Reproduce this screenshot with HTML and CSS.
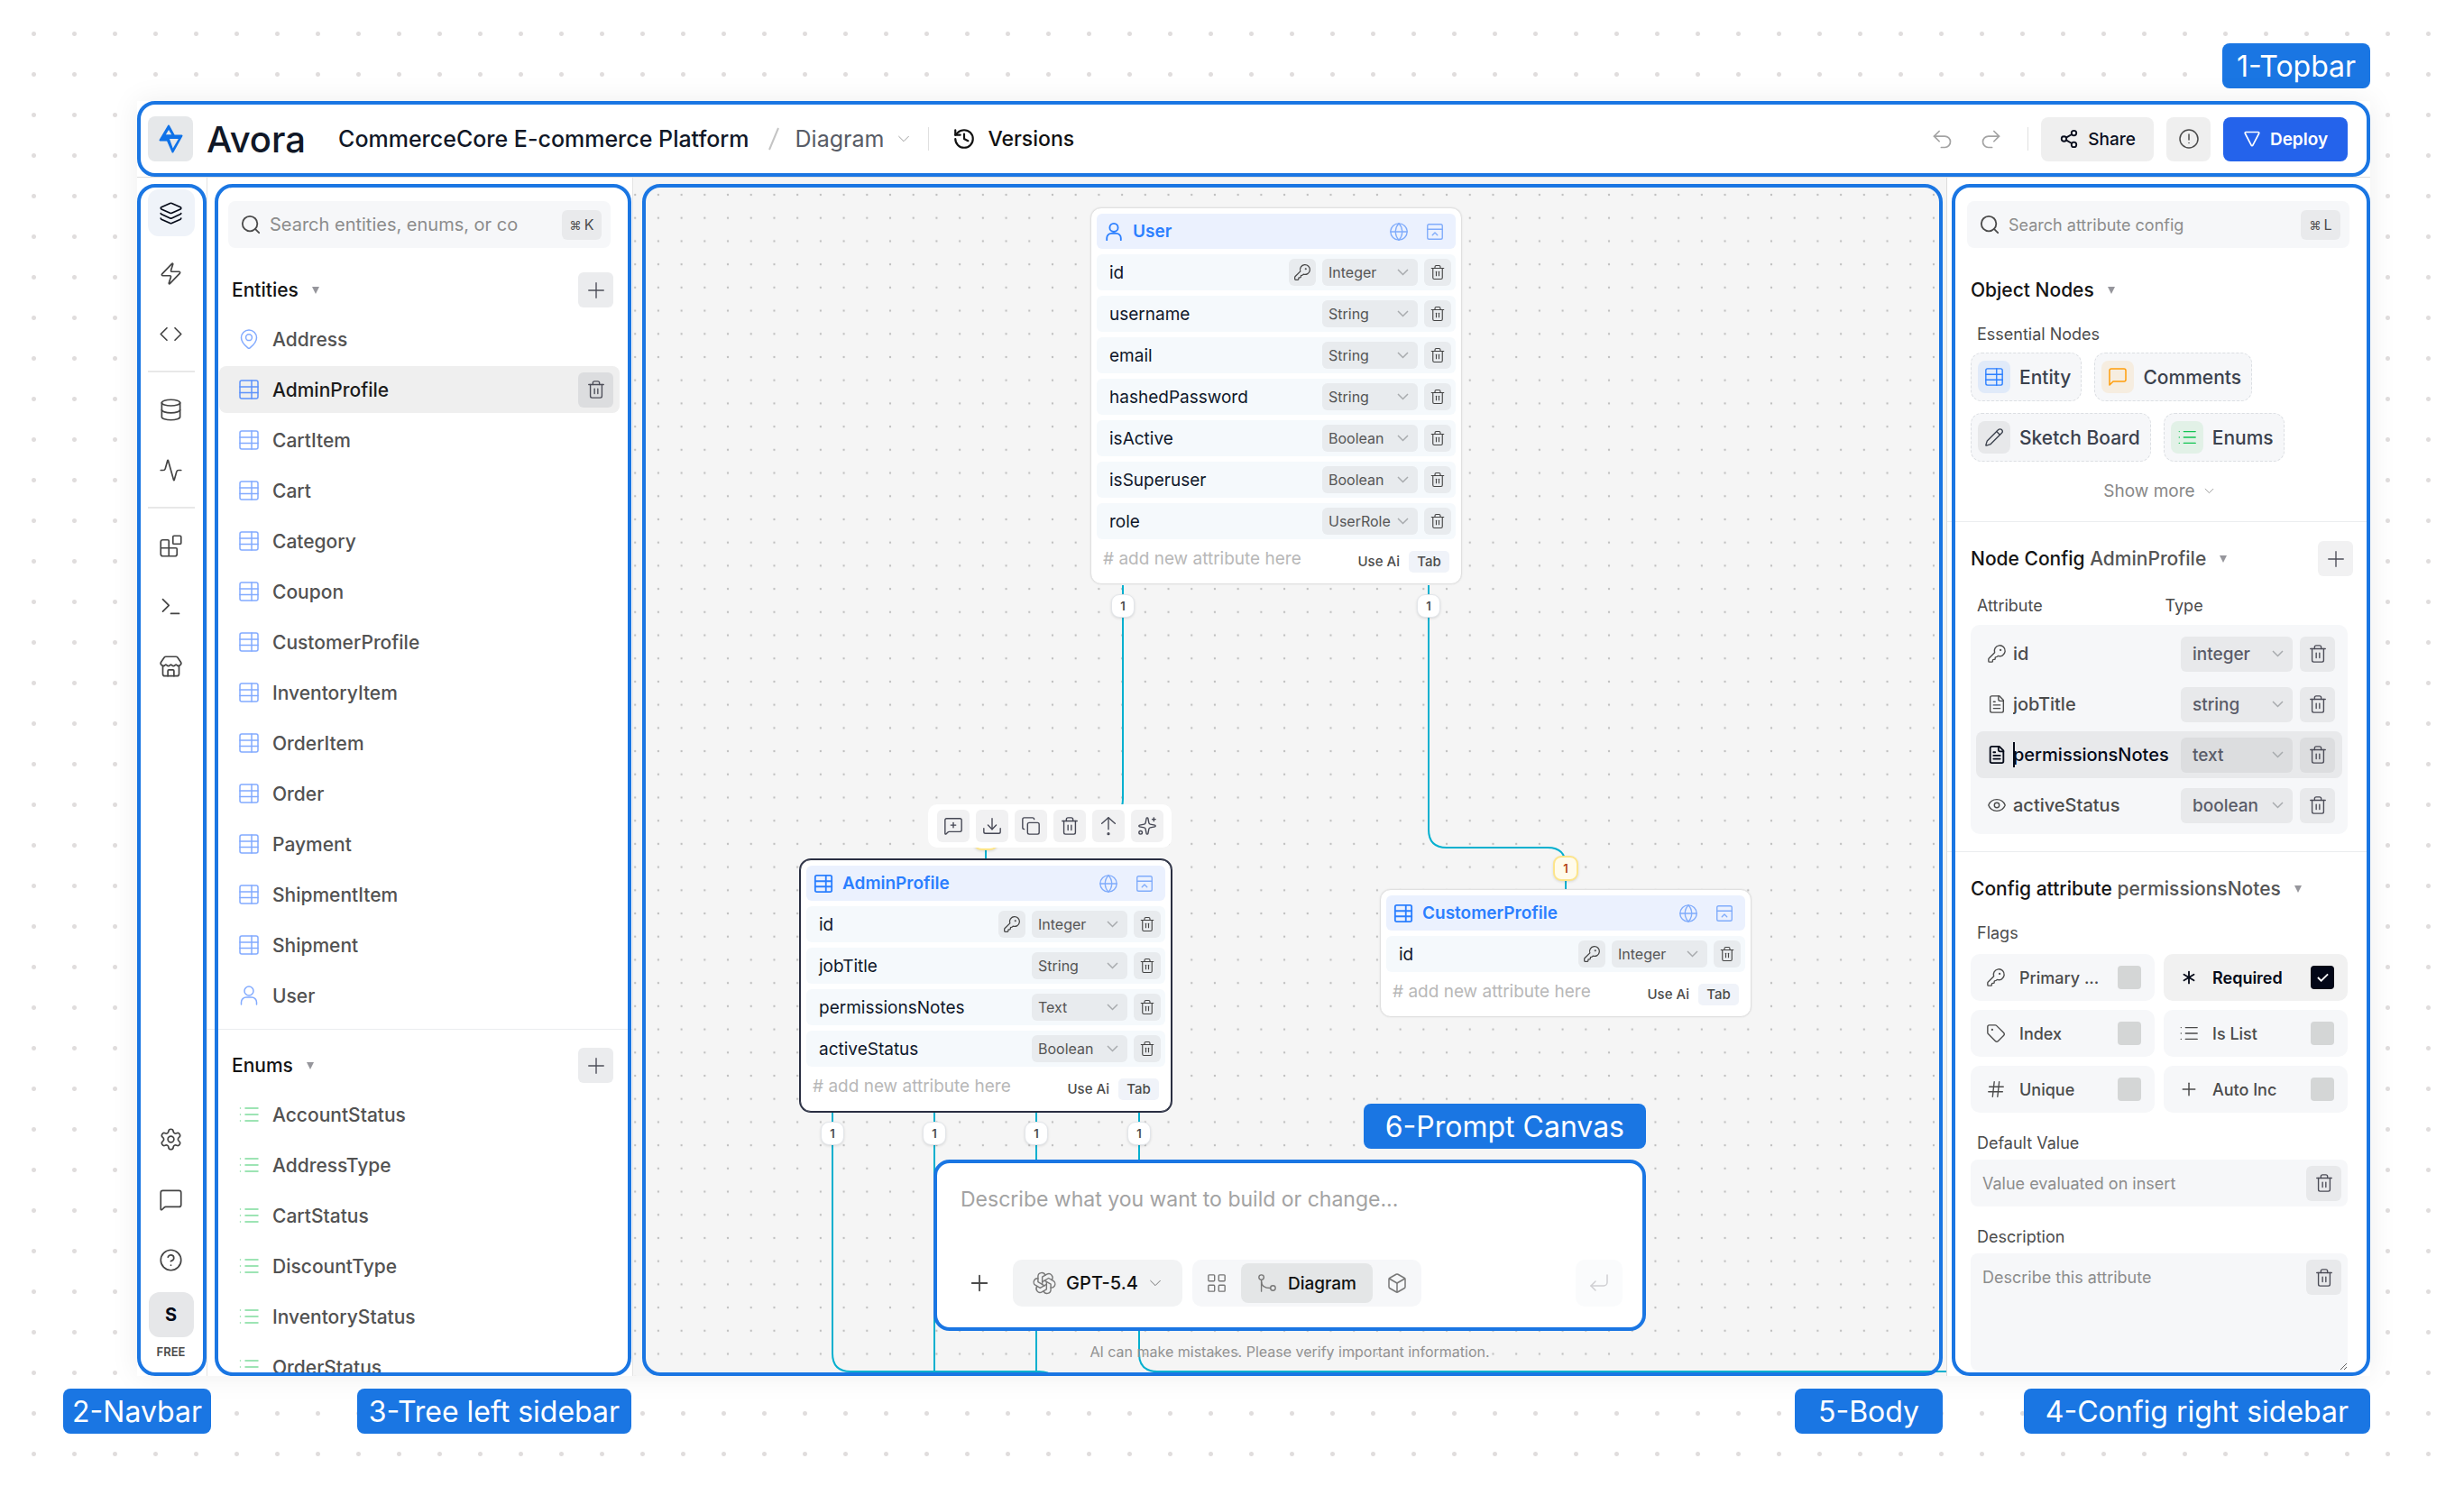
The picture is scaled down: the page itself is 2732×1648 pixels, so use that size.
FILE: index.html
```html
<!DOCTYPE html>
<html lang="en">
<head>
  <meta charset="UTF-8" />
  <meta name="viewport" content="width=device-width, initial-scale=1.0"/>
  <title>Avora - CommerceCore E-commerce Platform</title>
  <link rel="stylesheet" href="styles.css">
</head>
<body>

<!-- icon set -->
<svg class="sprite" aria-hidden="true">
  <symbol id="layers" viewBox="0 0 24 24"><path d="M12.83 2.18a2 2 0 0 0-1.66 0L2.6 6.08a1 1 0 0 0 0 1.83l8.58 3.91a2 2 0 0 0 1.66 0l8.58-3.9a1 1 0 0 0 0-1.83z"/><path d="M2 12a1 1 0 0 0 .58.91l8.6 3.91a2 2 0 0 0 1.65 0l8.58-3.9A1 1 0 0 0 22 12"/><path d="M2 17a1 1 0 0 0 .58.91l8.6 3.91a2 2 0 0 0 1.65 0l8.58-3.9A1 1 0 0 0 22 17"/></symbol>
  <symbol id="zap" viewBox="0 0 24 24"><path d="M4 14a1 1 0 0 1-.78-1.63l9.9-10.2a.5.5 0 0 1 .86.46l-1.92 6.02A1 1 0 0 0 13 10h7a1 1 0 0 1 .78 1.63l-9.9 10.2a.5.5 0 0 1-.86-.46l1.92-6.02A1 1 0 0 0 11 14z"/></symbol>
  <symbol id="code" viewBox="0 0 24 24"><path d="m16 18 6-6-6-6"/><path d="m8 6-6 6 6 6"/></symbol>
  <symbol id="database" viewBox="0 0 24 24"><ellipse cx="12" cy="5" rx="9" ry="3"/><path d="M3 5v14a9 3 0 0 0 18 0V5"/><path d="M3 12a9 3 0 0 0 18 0"/></symbol>
  <symbol id="activity" viewBox="0 0 24 24"><path d="M22 12h-2.48a2 2 0 0 0-1.93 1.46l-2.35 8.36a.25.25 0 0 1-.48 0L9.24 2.18a.25.25 0 0 0-.48 0l-2.35 8.36A2 2 0 0 1 4.49 12H2"/></symbol>
  <symbol id="blocks" viewBox="0 0 24 24"><path d="M10 22V7a1 1 0 0 0-1-1H4a2 2 0 0 0-2 2v12a2 2 0 0 0 2 2h12a2 2 0 0 0 2-2v-5a1 1 0 0 0-1-1H2"/><rect x="14" y="2" width="8" height="8" rx="1"/></symbol>
  <symbol id="terminal" viewBox="0 0 24 24"><path d="M12 19h8"/><path d="m4 17 6-6-6-6"/></symbol>
  <symbol id="store" viewBox="0 0 24 24"><path d="M15 21v-5a1 1 0 0 0-1-1h-4a1 1 0 0 0-1 1v5"/><path d="M17.774 10.31a1.12 1.12 0 0 0-1.549 0 2.5 2.5 0 0 1-3.451 0 1.12 1.12 0 0 0-1.548 0 2.5 2.5 0 0 1-3.452 0 1.12 1.12 0 0 0-1.549 0 2.5 2.5 0 0 1-3.77-3.248l2.889-4.184A2 2 0 0 1 7 2h10a2 2 0 0 1 1.653.873l2.895 4.192a2.5 2.5 0 0 1-3.774 3.244"/><path d="M4 10.95V19a2 2 0 0 0 2 2h12a2 2 0 0 0 2-2v-8.05"/></symbol>
  <symbol id="settings" viewBox="0 0 24 24"><path d="M9.671 4.136a2.34 2.34 0 0 1 4.659 0 2.34 2.34 0 0 0 3.319 1.915 2.34 2.34 0 0 1 2.33 4.033 2.34 2.34 0 0 0 0 3.831 2.34 2.34 0 0 1-2.33 4.033 2.34 2.34 0 0 0-3.319 1.915 2.34 2.34 0 0 1-4.659 0 2.34 2.34 0 0 0-3.32-1.915 2.34 2.34 0 0 1-2.33-4.033 2.34 2.34 0 0 0 0-3.831A2.34 2.34 0 0 1 6.35 6.051a2.34 2.34 0 0 0 3.319-1.915"/><circle cx="12" cy="12" r="3"/></symbol>
  <symbol id="message" viewBox="0 0 24 24"><path d="M22 17a2 2 0 0 1-2 2H6.828a2 2 0 0 0-1.414.586l-2.202 2.202A.71.71 0 0 1 2 21.286V5a2 2 0 0 1 2-2h16a2 2 0 0 1 2 2z"/></symbol>
  <symbol id="comment" viewBox="0 0 24 24"><path d="M21 15a2 2 0 0 1-2 2H7l-4 4V5a2 2 0 0 1 2-2h14a2 2 0 0 1 2 2z"/></symbol>
  <symbol id="comment-plus" viewBox="0 0 24 24"><path d="M22 17a2 2 0 0 1-2 2H6.828a2 2 0 0 0-1.414.586l-2.202 2.202A.71.71 0 0 1 2 21.286V5a2 2 0 0 1 2-2h16a2 2 0 0 1 2 2z"/><path d="M12 8v6"/><path d="M9 11h6"/></symbol>
  <symbol id="help" viewBox="0 0 24 24"><circle cx="12" cy="12" r="10"/><path d="M9.09 9a3 3 0 0 1 5.83 1c0 2-3 3-3 3"/><path d="M12 17h.01"/></symbol>
  <symbol id="alert" viewBox="0 0 24 24"><circle cx="12" cy="12" r="10"/><path d="M12 7v6"/><path d="M12 16.5h.01"/></symbol>
  <symbol id="search" viewBox="0 0 24 24"><circle cx="11" cy="11" r="9"/><path d="m22 22-4.600-4.600"/></symbol>
  <symbol id="plus" viewBox="0 0 24 24"><path d="M3 12h18"/><path d="M12 3v18"/></symbol>
  <symbol id="trash" viewBox="0 0 24 24"><path d="M3 6h18"/><path d="M19 6v14a2 2 0 0 1-2 2H7a2 2 0 0 1-2-2V6"/><path d="M8 6V4a2 2 0 0 1 2-2h4a2 2 0 0 1 2 2v2"/><path d="M10 11v6"/><path d="M14 11v6"/></symbol>
  <symbol id="pin" viewBox="0 0 24 24"><path d="M20.5 10.5c0 5-5.200 9.600-7.400 11.300a1.800 1.800 0 0 1-2.200 0C8.700 20.100 3.500 15.500 3.500 10.500a8.500 8.500 0 0 1 17 0"/><circle cx="12" cy="10.200" r="3.400"/></symbol>
  <symbol id="table" viewBox="0 0 24 24"><rect x="2" y="2" width="20" height="20" rx="2"/><path d="M15 2v20"/><path d="M22 9H2"/><path d="M22 15.5H2"/></symbol>
  <symbol id="user" viewBox="0 0 24 24"><circle cx="12" cy="7" r="5"/><path d="M3.5 22v-2.500A5.500 5.500 0 0 1 9 14h6a5.500 5.500 0 0 1 5.500 5.500V22"/></symbol>
  <symbol id="list" viewBox="0 0 24 24"><path d="M8 5h14"/><path d="M8 12h14"/><path d="M8 19h14"/><path d="M2.500 5h.01"/><path d="M2.500 12h.01"/><path d="M2.500 19h.01"/></symbol>
  <symbol id="chevron" viewBox="0 0 24 24"><path d="m4 8 8 8 8-8"/></symbol>
  <symbol id="history" viewBox="0 0 24 24"><path d="M3 12a9 9 0 1 0 9-9 9.750 9.750 0 0 0-6.740 2.740L3 8"/><path d="M3 3v5h5"/><path d="M12 7v5l4 2"/></symbol>
  <symbol id="undo" viewBox="0 0 24 24"><path d="M9 14 4 9l5-5"/><path d="M4 9h10.500a5.500 5.500 0 0 1 0 11H11"/></symbol>
  <symbol id="redo" viewBox="0 0 24 24"><path d="m15 14 5-5-5-5"/><path d="M20 9H9.500a5.500 5.500 0 0 0 0 11H13"/></symbol>
  <symbol id="share" viewBox="0 0 24 24"><circle cx="18" cy="5" r="3"/><circle cx="6" cy="12" r="3"/><circle cx="18" cy="19" r="3"/><path d="m8.590 13.510 6.830 3.980"/><path d="m15.410 6.510-6.820 3.980"/></symbol>
  <symbol id="deploy" viewBox="0 0 24 24"><path d="M3.800 3h16.400a1.200 1.200 0 0 1 1 1.800l-8.200 15.800a1.100 1.100 0 0 1-2 0L2.800 4.800a1.200 1.200 0 0 1 1-1.800z"/></symbol>
  <symbol id="globe" viewBox="0 0 24 24"><circle cx="12" cy="12" r="10"/><path d="M12 2a14.500 14.500 0 0 0 0 20 14.500 14.500 0 0 0 0-20"/><path d="M2 12h20"/></symbol>
  <symbol id="panel" viewBox="0 0 24 24"><rect x="3" y="3" width="18" height="18" rx="2"/><path d="M3 9h18"/><path d="m9 16 3-3 3 3"/></symbol>
  <symbol id="key" viewBox="0 0 24 24"><path d="M2.586 17.414A2 2 0 0 0 2 18.828V21a1 1 0 0 0 1 1h3a1 1 0 0 0 1-1v-1a1 1 0 0 1 1-1h1a1 1 0 0 0 1-1v-1a1 1 0 0 1 1-1h.172a2 2 0 0 0 1.414-.586l.814-.814a6.500 6.500 0 1 0-4-4z"/><circle cx="16.500" cy="7.500" r=".5"/></symbol>
  <symbol id="download" viewBox="0 0 24 24"><path d="M12 3v13"/><path d="m7 11 5 5 5-5"/><path d="M2 15v4a2 2 0 0 0 2 2h16a2 2 0 0 0 2-2v-4"/></symbol>
  <symbol id="copy" viewBox="0 0 24 24"><rect x="8" y="8" width="14" height="14" rx="2"/><path d="M4 16c-1.100 0-2-.9-2-2V4c0-1.100.9-2 2-2h10c1.100 0 2 .9 2 2"/></symbol>
  <symbol id="arrow-dot" viewBox="0 0 24 24"><path d="m4 9 8-7 8 7"/><path d="M12 2v14"/><circle cx="12" cy="21.500" r="1"/></symbol>
  <symbol id="sparkles" viewBox="0 0 24 24"><path d="M11.017 2.814a1 1 0 0 1 1.966 0l1.051 5.558a2 2 0 0 0 1.594 1.594l5.558 1.051a1 1 0 0 1 0 1.966l-5.558 1.051a2 2 0 0 0-1.594 1.594l-1.051 5.558a1 1 0 0 1-1.966 0l-1.051-5.558a2 2 0 0 0-1.594-1.594l-5.558-1.051a1 1 0 0 1 0-1.966l5.558-1.051a2 2 0 0 0 1.594-1.594z"/><path d="M20 2v4"/><path d="M22 4h-4"/><circle cx="4" cy="20" r="2"/></symbol>
  <symbol id="file" viewBox="0 0 24 24"><path d="M15 2H6a2 2 0 0 0-2 2v16a2 2 0 0 0 2 2h12a2 2 0 0 0 2-2V7z"/><path d="M14 2v4a2 2 0 0 0 2 2h4"/><path d="M10 9H8"/><path d="M16 13H8"/><path d="M16 17H8"/></symbol>
  <symbol id="eye" viewBox="0 0 24 24"><path d="M2.062 12.348a1 1 0 0 1 0-.696 10.750 10.750 0 0 1 19.876 0 1 1 0 0 1 0 .696 10.750 10.750 0 0 1-19.876 0"/><circle cx="12" cy="12" r="3"/></symbol>
  <symbol id="asterisk" viewBox="0 0 24 24"><path d="M12 5v14"/><path d="m18 8.500-12 7"/><path d="m6 8.500 12 7"/></symbol>
  <symbol id="tag" viewBox="0 0 24 24"><path d="M12.586 2.586A2 2 0 0 0 11.172 2H4a2 2 0 0 0-2 2v7.172a2 2 0 0 0 .586 1.414l8.704 8.704a2.426 2.426 0 0 0 3.420 0l6.580-6.580a2.426 2.426 0 0 0 0-3.420z"/><circle cx="7.500" cy="7.500" r=".5"/></symbol>
  <symbol id="hash" viewBox="0 0 24 24"><path d="M4 9h17"/><path d="M3 15h17"/><path d="M10 3 8 21"/><path d="m16 3-2 18"/></symbol>
  <symbol id="pencil" viewBox="0 0 24 24"><path d="M21.174 6.812a1 1 0 0 0-3.986-3.987L3.842 16.174a2 2 0 0 0-.5.830l-1.321 4.352a.5.5 0 0 0 .623.622l4.353-1.320a2 2 0 0 0 .830-.497z"/><path d="m15 5 4 4"/></symbol>
  <symbol id="grid" viewBox="0 0 24 24"><rect x="2" y="2" width="7.500" height="7.500" rx="1"/><rect x="14.500" y="2" width="7.500" height="7.500" rx="1"/><rect x="2" y="14.500" width="7.500" height="7.500" rx="1"/><rect x="14.500" y="14.500" width="7.500" height="7.500" rx="1"/></symbol>
  <symbol id="diagram" viewBox="0 0 24 24"><circle cx="5" cy="5" r="3"/><path d="M5 8v14"/><path d="M5 10c0 5 4 8 11 8"/><circle cx="19" cy="18" r="3"/></symbol>
  <symbol id="cube" viewBox="0 0 24 24"><path d="M21 8a2 2 0 0 0-1-1.730l-7-4a2 2 0 0 0-2 0l-7 4A2 2 0 0 0 3 8v8a2 2 0 0 0 1 1.730l7 4a2 2 0 0 0 2 0l7-4A2 2 0 0 0 21 16z"/><path d="m3.300 7 8.700 5 8.700-5"/><path d="M12 22V12"/></symbol>
  <symbol id="return" viewBox="0 0 24 24"><path d="M21 3v8a4 4 0 0 1-4 4H3"/><path d="m8 10-5 5 5 5"/></symbol>
  <symbol id="openai" viewBox="1 1 22 22"><path d="M11.217 19.384a3.501 3.501 0 0 0 6.783-1.217v-5.167l-6-3.350"/><path d="M5.214 15.014a3.501 3.501 0 0 0 4.446 5.266l4.340-2.534v-6.946"/><path d="M6 7.630c-1.391-.236-2.787.395-3.534 1.689a3.474 3.474 0 0 0 1.271 4.745l4.263 2.514 6-3.348"/><path d="M12.783 4.616a3.501 3.501 0 0 0-6.783 1.217v5.067l6 3.450"/><path d="M18.786 8.986a3.501 3.501 0 0 0-4.446-5.266l-4.340 2.534v6.946"/><path d="M18 16.302c1.391.236 2.787-.395 3.534-1.689a3.474 3.474 0 0 0-1.271-4.745l-4.308-2.514-5.955 3.420"/></symbol>
</svg>

<div class="tags tags-top">
  <span class="tag">1-Topbar</span>
</div>

<div class="app">
  <header class="topbar cell">
    <a class="logo" href="#" aria-label="Avora home">
      <svg class="logo-mark" viewBox="0 0 27 32"><path d="M11 1.500 1.500 17.500H9.800L15.500 30.500 25.500 12.500H17Z"/><path class="logo-hole" d="M11 6 14.200 11.300H7.900Z"/><path class="logo-hole" d="M12 16H21.800L15.700 26.500Z"/></svg>
    </a>
    <span class="brand">Avora</span>
    <h1 class="project">CommerceCore E-commerce Platform</h1>
    <svg class="slash" viewBox="0 0 12 26"><path d="M11 1 1 25"/></svg>
    <button class="view-btn">Diagram <svg class="icon icon-16"><use href="#chevron"/></svg></button>
    <i class="bar"></i>
    <button class="versions"><svg class="icon icon-26 bold"><use href="#history"/></svg>Versions</button>
    <div class="actions">
      <button class="plain" aria-label="Undo"><svg class="icon icon-27"><use href="#undo"/></svg></button>
      <button class="plain" aria-label="Redo"><svg class="icon icon-27"><use href="#redo"/></svg></button>
      <i class="bar"></i>
      <button class="btn share"><svg class="icon icon-22 bold"><use href="#share"/></svg>Share</button>
      <button class="btn info" aria-label="Info"><svg class="icon icon-24"><use href="#alert"/></svg></button>
      <button class="btn deploy"><svg class="icon icon-20 bold"><use href="#deploy"/></svg>Deploy</button>
    </div>
  </header>

  <nav class="navbar cell">
    <button class="nav-btn active" aria-label="Layers"><svg class="icon icon-27"><use href="#layers"/></svg></button>
    <button class="nav-btn" aria-label="Actions"><svg class="icon icon-27"><use href="#zap"/></svg></button>
    <button class="nav-btn" aria-label="Code"><svg class="icon icon-27"><use href="#code"/></svg></button>
    <hr>
    <button class="nav-btn" aria-label="Database"><svg class="icon icon-27"><use href="#database"/></svg></button>
    <button class="nav-btn" aria-label="Activity"><svg class="icon icon-27"><use href="#activity"/></svg></button>
    <hr>
    <button class="nav-btn" aria-label="Integrations"><svg class="icon icon-27"><use href="#blocks"/></svg></button>
    <button class="nav-btn" aria-label="Terminal"><svg class="icon icon-27"><use href="#terminal"/></svg></button>
    <button class="nav-btn" aria-label="Store"><svg class="icon icon-27"><use href="#store"/></svg></button>
    <div class="nav-bottom">
      <button class="nav-btn" aria-label="Settings"><svg class="icon icon-27"><use href="#settings"/></svg></button>
      <button class="nav-btn" aria-label="Messages"><svg class="icon icon-27"><use href="#message"/></svg></button>
      <button class="nav-btn" aria-label="Help"><svg class="icon icon-27"><use href="#help"/></svg></button>
    </div>
    <button class="avatar">S</button>
    <span class="plan">FREE</span>
  </nav>

  <aside class="tree cell">
    <label class="search">
      <svg class="icon icon-22 bold"><use href="#search"/></svg>
      <input type="text" placeholder="Search entities, enums, or co" aria-label="Search entities">
      <kbd><small>⌘</small>K</kbd>
    </label>
    <section class="tree-section">
      <div class="section-head">
        <h2>Entities</h2><svg class="caret" viewBox="0 0 10 10"><path d="M1 1h8L5 9z"/></svg>
        <button class="square tint" aria-label="Add entity"><svg class="icon icon-22"><use href="#plus"/></svg></button>
      </div>
      <ul class="items">
        <li><svg class="icon icon-24"><use href="#pin"/></svg><a href="#">Address</a></li>
        <li class="selected"><svg class="icon icon-24"><use href="#table"/></svg><a href="#">AdminProfile</a><button class="square dark" aria-label="Delete AdminProfile"><svg class="icon icon-22"><use href="#trash"/></svg></button></li>
        <li><svg class="icon icon-24"><use href="#table"/></svg><a href="#">CartItem</a></li>
        <li><svg class="icon icon-24"><use href="#table"/></svg><a href="#">Cart</a></li>
        <li><svg class="icon icon-24"><use href="#table"/></svg><a href="#">Category</a></li>
        <li><svg class="icon icon-24"><use href="#table"/></svg><a href="#">Coupon</a></li>
        <li><svg class="icon icon-24"><use href="#table"/></svg><a href="#">CustomerProfile</a></li>
        <li><svg class="icon icon-24"><use href="#table"/></svg><a href="#">InventoryItem</a></li>
        <li><svg class="icon icon-24"><use href="#table"/></svg><a href="#">OrderItem</a></li>
        <li><svg class="icon icon-24"><use href="#table"/></svg><a href="#">Order</a></li>
        <li><svg class="icon icon-24"><use href="#table"/></svg><a href="#">Payment</a></li>
        <li><svg class="icon icon-24"><use href="#table"/></svg><a href="#">ShipmentItem</a></li>
        <li><svg class="icon icon-24"><use href="#table"/></svg><a href="#">Shipment</a></li>
        <li><svg class="icon icon-24"><use href="#user"/></svg><a href="#">User</a></li>
      </ul>
    </section>
    <section class="tree-section">
      <div class="section-head">
        <h2>Enums</h2><svg class="caret" viewBox="0 0 10 10"><path d="M1 1h8L5 9z"/></svg>
        <button class="square tint" aria-label="Add enum"><svg class="icon icon-22"><use href="#plus"/></svg></button>
      </div>
      <ul class="items enums">
        <li><svg class="icon icon-24"><use href="#list"/></svg><a href="#">AccountStatus</a></li>
        <li><svg class="icon icon-24"><use href="#list"/></svg><a href="#">AddressType</a></li>
        <li><svg class="icon icon-24"><use href="#list"/></svg><a href="#">CartStatus</a></li>
        <li><svg class="icon icon-24"><use href="#list"/></svg><a href="#">DiscountType</a></li>
        <li><svg class="icon icon-24"><use href="#list"/></svg><a href="#">InventoryStatus</a></li>
        <li><svg class="icon icon-24"><use href="#list"/></svg><a href="#">OrderStatus</a></li>
      </ul>
    </section>
  </aside>

  <main class="canvas cell">
    <svg class="edges">
      <defs>
        <pattern id="dots" x="-10.650" y="6.150" width="25.710" height="25.710" patternUnits="userSpaceOnUse"><circle cx="12.850" cy="12.850" r="1.200"/></pattern>
      </defs>
      <rect width="100%" height="100%" fill="url(#dots)"/>
      <path d="M543 452V689Q543 709 523 709H411Q391 709 391 729V755"/>
      <path d="M882 452V723Q882 743 902 743H1014Q1034 743 1034 763V789"/>
      <path d="M221 1036V1304Q221 1324 241 1324H450Q470 1324 470 1344"/>
      <path d="M334 1036V1330"/>
      <path d="M447 1036V1330"/>
      <path d="M561 1036V1304Q561 1324 581 1324H3000"/>
    </svg>
    <span class="badge b1">1</span>
    <span class="badge b2">1</span>
    <span class="badge warn b3">1</span>
    <span class="badge warn b4">1</span>
    <span class="badge b5">1</span>
    <span class="badge b6">1</span>
    <span class="badge b7">1</span>
    <span class="badge b8">1</span>

    <article class="node node-user">
      <header><svg class="icon icon-22 bold"><use href="#user"/></svg><h3>User</h3><svg class="icon icon-22 soft"><use href="#globe"/></svg><svg class="icon icon-22 soft"><use href="#panel"/></svg></header>
      <div class="field"><span>id</span><button aria-label="Primary key"><svg class="icon icon-20"><use href="#key"/></svg></button><select aria-label="id type"><option>Integer</option></select><button aria-label="Delete"><svg class="icon icon-18"><use href="#trash"/></svg></button></div>
      <div class="field"><span>username</span><select aria-label="username type"><option>String</option></select><button aria-label="Delete"><svg class="icon icon-18"><use href="#trash"/></svg></button></div>
      <div class="field"><span>email</span><select aria-label="email type"><option>String</option></select><button aria-label="Delete"><svg class="icon icon-18"><use href="#trash"/></svg></button></div>
      <div class="field"><span>hashedPassword</span><select aria-label="hashedPassword type"><option>String</option></select><button aria-label="Delete"><svg class="icon icon-18"><use href="#trash"/></svg></button></div>
      <div class="field"><span>isActive</span><select aria-label="isActive type"><option>Boolean</option></select><button aria-label="Delete"><svg class="icon icon-18"><use href="#trash"/></svg></button></div>
      <div class="field"><span>isSuperuser</span><select aria-label="isSuperuser type"><option>Boolean</option></select><button aria-label="Delete"><svg class="icon icon-18"><use href="#trash"/></svg></button></div>
      <div class="field"><span>role</span><select aria-label="role type"><option>UserRole</option></select><button aria-label="Delete"><svg class="icon icon-18"><use href="#trash"/></svg></button></div>
      <footer><input type="text" placeholder="# add new attribute here" aria-label="New attribute"><span class="hint">Use Ai <kbd>Tab</kbd></span></footer>
    </article>

    <article class="node node-admin">
      <div class="toolbar">
        <button aria-label="Comment"><svg class="icon icon-22"><use href="#comment-plus"/></svg></button>
        <button aria-label="Download"><svg class="icon icon-22"><use href="#download"/></svg></button>
        <button aria-label="Duplicate"><svg class="icon icon-22"><use href="#copy"/></svg></button>
        <button aria-label="Delete"><svg class="icon icon-22"><use href="#trash"/></svg></button>
        <button aria-label="Move up"><svg class="icon icon-22"><use href="#arrow-dot"/></svg></button>
        <button aria-label="Generate"><svg class="icon icon-22"><use href="#sparkles"/></svg></button>
      </div>
      <header><svg class="icon icon-22 bold"><use href="#table"/></svg><h3>AdminProfile</h3><svg class="icon icon-22 soft"><use href="#globe"/></svg><svg class="icon icon-22 soft"><use href="#panel"/></svg></header>
      <div class="field"><span>id</span><button aria-label="Primary key"><svg class="icon icon-20"><use href="#key"/></svg></button><select aria-label="id type"><option>Integer</option></select><button aria-label="Delete"><svg class="icon icon-18"><use href="#trash"/></svg></button></div>
      <div class="field"><span>jobTitle</span><select aria-label="jobTitle type"><option>String</option></select><button aria-label="Delete"><svg class="icon icon-18"><use href="#trash"/></svg></button></div>
      <div class="field"><span>permissionsNotes</span><select aria-label="permissionsNotes type"><option>Text</option></select><button aria-label="Delete"><svg class="icon icon-18"><use href="#trash"/></svg></button></div>
      <div class="field"><span>activeStatus</span><select aria-label="activeStatus type"><option>Boolean</option></select><button aria-label="Delete"><svg class="icon icon-18"><use href="#trash"/></svg></button></div>
      <footer><input type="text" placeholder="# add new attribute here" aria-label="New attribute"><span class="hint">Use Ai <kbd>Tab</kbd></span></footer>
    </article>

    <article class="node node-customer">
      <header><svg class="icon icon-22 bold"><use href="#table"/></svg><h3>CustomerProfile</h3><svg class="icon icon-22 soft"><use href="#globe"/></svg><svg class="icon icon-22 soft"><use href="#panel"/></svg></header>
      <div class="field"><span>id</span><button aria-label="Primary key"><svg class="icon icon-20"><use href="#key"/></svg></button><select aria-label="id type"><option>Integer</option></select><button aria-label="Delete"><svg class="icon icon-18"><use href="#trash"/></svg></button></div>
      <footer><input type="text" placeholder="# add new attribute here" aria-label="New attribute"><span class="hint">Use Ai <kbd>Tab</kbd></span></footer>
    </article>

    <div class="prompt-wrap">
      <span class="tag tag-wide">6-Prompt Canvas</span>
      <form class="prompt">
        <input type="text" placeholder="Describe what you want to build or change..." aria-label="Prompt">
        <div class="prompt-tools">
          <button type="button" class="attach" aria-label="Attach"><svg class="icon icon-22 bold"><use href="#plus"/></svg></button>
          <button type="button" class="model"><svg class="icon icon-26 thin"><use href="#openai"/></svg>GPT-5.4<svg class="icon icon-16"><use href="#chevron"/></svg></button>
          <div class="modes">
            <button type="button" aria-label="Grid"><svg class="icon icon-22"><use href="#grid"/></svg></button>
            <button type="button" class="on"><svg class="icon icon-22"><use href="#diagram"/></svg>Diagram</button>
            <button type="button" aria-label="Object"><svg class="icon icon-24"><use href="#cube"/></svg></button>
          </div>
          <button type="submit" class="send" aria-label="Send"><svg class="icon icon-24"><use href="#return"/></svg></button>
        </div>
      </form>
      <p class="disclaimer">AI can make mistakes. Please verify important information.</p>
    </div>
  </main>

  <aside class="config cell">
    <section>
      <label class="search small">
        <svg class="icon icon-22 bold"><use href="#search"/></svg>
        <input type="text" placeholder="Search attribute config" aria-label="Search attribute config">
        <kbd><small>⌘</small>L</kbd>
      </label>
      <div class="section-head">
        <h2>Object Nodes</h2><svg class="caret" viewBox="0 0 10 10"><path d="M1 1h8L5 9z"/></svg>
      </div>
      <h4 class="sub">Essential Nodes</h4>
      <div class="chips">
        <button class="chip blue"><span><svg class="icon icon-22"><use href="#table"/></svg></span>Entity</button>
        <button class="chip orange"><span><svg class="icon icon-24"><use href="#comment"/></svg></span>Comments</button>
        <button class="chip"><span><svg class="icon icon-22"><use href="#pencil"/></svg></span>Sketch Board</button>
        <button class="chip green"><span><svg class="icon icon-22"><use href="#list"/></svg></span>Enums</button>
      </div>
      <button class="more">Show more <svg class="icon icon-13"><use href="#chevron"/></svg></button>
    </section>

    <section>
      <div class="section-head">
        <h2>Node Config <em>AdminProfile</em></h2><svg class="caret" viewBox="0 0 10 10"><path d="M1 1h8L5 9z"/></svg>
        <button class="square light" aria-label="Add attribute"><svg class="icon icon-22"><use href="#plus"/></svg></button>
      </div>
      <div class="attr-head"><span>Attribute</span><span>Type</span></div>
      <ul class="attr-list">
        <li><svg class="icon icon-22"><use href="#key"/></svg><input type="text" value="id" aria-label="Attribute name"><select aria-label="Type"><option>integer</option></select><button class="square" aria-label="Delete"><svg class="icon icon-22"><use href="#trash"/></svg></button></li>
        <li><svg class="icon icon-22"><use href="#file"/></svg><input type="text" value="jobTitle" aria-label="Attribute name"><select aria-label="Type"><option>string</option></select><button class="square" aria-label="Delete"><svg class="icon icon-22"><use href="#trash"/></svg></button></li>
        <li class="selected"><svg class="icon icon-22 bold"><use href="#file"/></svg><input type="text" value="permissionsNotes" aria-label="Attribute name"><select aria-label="Type"><option>text</option></select><button class="square" aria-label="Delete"><svg class="icon icon-22"><use href="#trash"/></svg></button></li>
        <li><svg class="icon icon-22"><use href="#eye"/></svg><input type="text" value="activeStatus" aria-label="Attribute name"><select aria-label="Type"><option>boolean</option></select><button class="square" aria-label="Delete"><svg class="icon icon-22"><use href="#trash"/></svg></button></li>
      </ul>
    </section>

    <section>
      <div class="section-head">
        <h2>Config attribute <em>permissionsNotes</em></h2><svg class="caret" viewBox="0 0 10 10"><path d="M1 1h8L5 9z"/></svg>
      </div>
      <h4 class="sub flags-title">Flags</h4>
      <div class="flags">
        <label><svg class="icon icon-22"><use href="#key"/></svg><span>Primary ...</span><input type="checkbox"></label>
        <label class="on"><svg class="icon icon-22 bold"><use href="#asterisk"/></svg><span>Required</span><input type="checkbox" checked></label>
        <label><svg class="icon icon-22"><use href="#tag"/></svg><span>Index</span><input type="checkbox"></label>
        <label><svg class="icon icon-22"><use href="#list"/></svg><span>Is List</span><input type="checkbox"></label>
        <label><svg class="icon icon-22"><use href="#hash"/></svg><span>Unique</span><input type="checkbox"></label>
        <label><svg class="icon icon-18 bold"><use href="#plus"/></svg><span>Auto Inc</span><input type="checkbox"></label>
      </div>
      <label class="sub field-label" for="default-value">Default Value</label>
      <div class="box">
        <input type="text" id="default-value" placeholder="Value evaluated on insert">
        <button class="square" aria-label="Clear default"><svg class="icon icon-22"><use href="#trash"/></svg></button>
      </div>
      <label class="sub field-label" for="description">Description</label>
      <div class="box tall">
        <textarea id="description" placeholder="Describe this attribute"></textarea>
        <button class="square" aria-label="Clear description"><svg class="icon icon-22"><use href="#trash"/></svg></button>
      </div>
    </section>
  </aside>
</div>

<div class="tags tags-bottom">
  <span class="tag">2-Navbar</span>
  <span class="tag tag-mid">3-Tree left sidebar</span>
  <span class="tag">5-Body</span>
  <span class="tag tag-wide">4-Config right sidebar</span>
</div>

</body>
</html>
```
FILE: styles.css
```css
* {
  box-sizing: border-box;
}

body {
  margin: 0;
  height: 100vh;
  display: flex;
  flex-direction: column;
  font-family: Inter, "Liberation Sans", Arial, sans-serif;
  font-size: 20px;
  color: #4b4b4b;
  background: #fff radial-gradient(circle, #e0dddd 2px, transparent 3px) 15px 15px / 45px 45px;
}

h1, h2, h3, h4, p, ul {
  margin: 0;
  padding: 0;
  font-size: 21px;
  font-weight: 500;
}

ul {
  list-style: none;
}

a {
  color: inherit;
  text-decoration: none;
}

button, input, select, textarea {
  font: inherit;
  color: inherit;
  border: none;
  margin: 0;
  padding: 0;
  background: none;
  outline: none;
}

button {
  display: flex;
  align-items: center;
  justify-content: center;
  flex-shrink: 0;
  cursor: pointer;
}

input::placeholder, textarea::placeholder {
  color: #8c8c8c;
  opacity: 1;
}

select {
  appearance: none;
  flex-shrink: 0;
  background: #e8ebee url("data:image/svg+xml,%3Csvg xmlns='http://www.w3.org/2000/svg' viewBox='0 0 13 8' fill='none' stroke='%23a8abae' stroke-width='1.500'%3E%3Cpath d='M1 1l5.500 5.500L12 1'/%3E%3C/svg%3E") no-repeat right 10px center / 13px 8px;
}

hr {
  border: none;
  margin: 0;
}

/* icons */
.sprite {
  display: none;
}

.icon {
  display: block;
  flex-shrink: 0;
  fill: none;
  stroke: currentColor;
  stroke-width: 1.5;
  stroke-linecap: round;
  stroke-linejoin: round;
}

.icon-13 { width: 13px; height: 13px; }
.icon-16 { width: 16px; height: 16px; }
.icon-18 { width: 18px; height: 18px; }
.icon-20 { width: 20px; height: 20px; }
.icon-22 { width: 22px; height: 22px; }
.icon-24 { width: 24px; height: 24px; }
.icon-26 { width: 26px; height: 26px; }
.icon-27 { width: 27px; height: 27px; }

.thin { stroke-width: 1.2; }
.bold { stroke-width: 2; }

/* section tags */
.tags {
  height: 50px;
  flex-shrink: 0;
}

.tags-top {
  margin: 48px 104px 14px 152px;
  display: flex;
  justify-content: flex-end;
}

.tags-bottom {
  margin: 14px 104px 58px 152px;
  display: grid;
  grid-template-columns: 82px 466px 1fr 474px;
  justify-items: end;
}

.tag {
  min-width: 164px;
  height: 50px;
  padding: 0 10px;
  border-radius: 8px;
  background: #1a76e3;
  color: #fff;
  font-size: 32px;
  line-height: 52px;
  text-align: center;
  white-space: nowrap;
}

.tag-mid { padding: 0 13px; }
.tag-wide { padding: 0 24px; }

/* app shell */
.app {
  flex: 1;
  min-height: 0;
  margin: 0 104px 0 152px;
  display: grid;
  grid-template-columns: 78px 472px 1fr 470px;
  grid-template-rows: auto 1fr;
  background: #fff;
  box-shadow: 0 0 30px rgba(0, 0, 0, 0.07);
}

.cell {
  position: relative;
  min-width: 0;
  min-height: 0;
}

/* blue outline that marks each region */
.cell::after {
  content: "";
  position: absolute;
  inset: 7px 0 0 0;
  border: 4px solid #1a76e3;
  border-radius: 20px;
  pointer-events: none;
}

/* topbar */
.topbar {
  grid-column: 1 / -1;
  height: 85px;
  padding: 0 25px 0 12px;
  display: flex;
  align-items: center;
  border-bottom: 1px solid #dedede;
}

.topbar::after {
  inset: 0;
}

.logo {
  width: 50px;
  height: 50px;
  border-radius: 8px;
  background: #e6e8ea;
  display: flex;
  align-items: center;
  justify-content: center;
}

.logo-mark {
  width: 27px;
  height: 32px;
  fill: #0f72e8;
  stroke: #0f72e8;
  stroke-width: 2;
  stroke-linejoin: round;
}

.logo-hole {
  fill: #e6e8ea;
  stroke: none;
}

.brand {
  margin-left: 15px;
  font-size: 40px;
  font-weight: 500;
  color: #111827;
}

.project {
  margin-left: 36px;
  font-size: 25px;
  color: #111827;
}

.slash {
  width: 12px;
  height: 26px;
  margin: 0 18px 0 21px;
  fill: none;
  stroke: #c4c4c4;
  stroke-width: 2;
}

.view-btn {
  gap: 14px;
  font-size: 25px;
  color: #585c66;
}

.view-btn .icon {
  color: #a0a0a0;
}

.bar {
  width: 1px;
  height: 26px;
  margin-left: 19px;
  background: #e0e0e0;
}

.versions {
  margin-left: 26px;
  gap: 13px;
  font-size: 23px;
  font-weight: 500;
  color: #111;
}

.actions {
  margin-left: auto;
  display: flex;
  align-items: center;
  gap: 14px;
}

.plain {
  width: 27px;
  margin-right: 13px;
  color: #a3a3a3;
}

.actions .bar {
  margin: 0;
}

.btn {
  height: 49px;
  border-radius: 8px;
  background: #efefef;
  font-size: 19px;
  font-weight: 500;
  gap: 10px;
}

.share {
  width: 125px;
  color: #0a0f1e;
}

.info {
  width: 49px;
}

.deploy {
  width: 138px;
  background: #2463eb;
  color: #fff;
  font-weight: 600;
}

/* navbar */
.navbar {
  padding: 13px 2px 19px 0;
  display: flex;
  flex-direction: column;
  align-items: center;
  gap: 15px;
  border-right: 1px solid #e4e4e4;
}

.nav-btn {
  width: 52px;
  height: 52px;
  border-radius: 12px;
  color: #444;
}

.nav-btn.active {
  background: #eff3f9;
  color: #050a18;
}

.navbar hr {
  width: 52px;
  height: 2px;
  background: #e8e8e8;
}

.nav-bottom {
  margin-top: auto;
  display: flex;
  flex-direction: column;
  gap: 15px;
}

.avatar {
  width: 50px;
  height: 50px;
  margin-top: -5px;
  border-radius: 12px;
  background: #e6e7e9;
  color: #050a18;
  font-size: 20px;
  font-weight: 700;
}

.plan {
  margin-top: -7px;
  font-size: 13px;
  line-height: 16px;
  font-weight: 600;
}

/* search fields */
.search {
  height: 52px;
  padding: 0 10px 0 14px;
  display: flex;
  align-items: center;
  gap: 10px;
  border-radius: 8px;
  background: #f6f7f9;
}

.search input {
  flex: 1;
  min-width: 0;
}

.search.small {
  font-size: 18px;
}

.search kbd {
  width: 44px;
  height: 33px;
  border-radius: 6px;
  background: #e9eaec;
  font-family: inherit;
  font-size: 16px;
  line-height: 33px;
  text-align: center;
}

.search small {
  margin-right: 3px;
  font-size: 13px;
}

.section-head {
  height: 39px;
  display: flex;
  align-items: center;
}

.section-head h2 {
  color: #141414;
}

.section-head em {
  font-style: normal;
  color: #555;
}

.caret {
  width: 10px;
  height: 10px;
  margin-left: 14px;
  fill: #96969c;
}

.square {
  width: 39px;
  height: 39px;
  border-radius: 6px;
  background: #e8e9eb;
  color: #4c4d58;
}

.section-head .square {
  margin-left: auto;
}

.square.tint { background: #ebecee; }
.square.dark { background: #dcdddf; }
.square.light { background: #f1f1f2; }

/* tree */
.tree {
  padding-top: 26px;
  overflow: hidden;
  border-right: 1px solid #e4e4e4;
}

.tree::after {
  inset: 7px 1px 0 8px;
}

.tree .search {
  margin: 0 24px 27px 23px;
}

.tree .section-head {
  margin: 0 21px 9px 27px;
}

.tree-section + .tree-section {
  margin-top: 11px;
  padding-top: 20px;
  border-top: 1px solid #ebedef;
}

.items {
  padding: 0 14px 0 13px;
  display: flex;
  flex-direction: column;
  gap: 4px;
}

.items li {
  height: 52px;
  padding: 0 7px 0 21px;
  display: flex;
  align-items: center;
  gap: 14px;
  border-radius: 8px;
  font-size: 21px;
  font-weight: 500;
  color: #525252;
}

.items .icon {
  color: #83abff;
}

.items.enums .icon {
  color: #7ddc9c;
}

.items .selected {
  background: #efefef;
  color: #1c1c1c;
}

.items .selected .icon {
  color: #5e93fb;
}

.items .selected .square {
  margin-left: auto;
}

.items .selected .square .icon {
  color: #4c4d58;
}

/* canvas */
.canvas {
  overflow: hidden;
  background: #f5f5f5;
}

.canvas::after {
  inset: 7px 4px 0 10px;
}

.edges {
  position: absolute;
  inset: 0;
  width: 100%;
  height: 100%;
  fill: none;
  stroke: #06b0cf;
  stroke-width: 2;
}

.edges rect, .edges circle {
  stroke: none;
}

.edges circle {
  fill: #c0c0c0;
}

.badge {
  position: absolute;
  width: 26px;
  height: 26px;
  border: 1px solid #e3e6ea;
  border-radius: 9px;
  background: #fff;
  box-shadow: 0 1px 3px rgba(0, 0, 0, 0.12);
  font-size: 13px;
  font-weight: 600;
  line-height: 24px;
  text-align: center;
}

.badge.warn {
  width: 28px;
  height: 28px;
  border: 2px solid #fde58a;
  background: #fffbeb;
  color: #b4430e;
}

.b1 { left: 530px; top: 462px; }
.b2 { left: 869px; top: 462px; }
.b3 { left: 377px; top: 718px; }
.b4 { left: 1020px; top: 752px; }
.b5 { left: 208px; top: 1047px; }
.b6 { left: 321px; top: 1047px; }
.b7 { left: 434px; top: 1047px; }
.b8 { left: 548px; top: 1047px; }

.node {
  position: absolute;
  width: 412px;
  padding: 6px;
  border: 1px solid #e0e0e0;
  border-radius: 12px;
  background: #fff;
  box-shadow: 0 0 2px rgba(0, 0, 0, 0.1);
  font-size: 19px;
}

.node-user { left: 507px; top: 33px; }
.node-admin { left: 185px; top: 756px; border-color: #2a2f42; box-shadow: 0 0 0 1px #2a2f42; }
.node-customer { left: 828px; top: 789px; }

.node header {
  height: 39px;
  padding: 0 12px 0 8px;
  display: flex;
  align-items: center;
  gap: 18px;
  border-radius: 6px;
  background: #ebf1fe;
  color: #2b7fff;
}

.node h3 {
  flex: 1;
  margin-left: -8px;
  font-size: 19px;
  font-weight: 600;
}

.soft {
  color: #80acfb;
}

.field {
  height: 40px;
  margin-top: 6px;
  padding: 0 5px 0 14px;
  display: flex;
  align-items: center;
  gap: 7px;
  border-radius: 6px;
  background: #f5f9fc;
  color: #0f172a;
}

.field span {
  flex: 1;
}

.field button {
  width: 30px;
  height: 30px;
  border-radius: 6px;
  background: #e8ebee;
  color: #444;
}

.field select {
  width: 106px;
  height: 30px;
  padding-left: 7px;
  border-radius: 6px;
  color: #555;
  font-size: 16px;
}

.node footer {
  height: 43px;
  padding: 0 7px 0 7px;
  display: flex;
  align-items: center;
}

.node footer input {
  flex: 1;
  min-width: 0;
}

.node footer input::placeholder {
  color: #b8b8b8;
}

.hint {
  padding-top: 6px;
  display: flex;
  align-items: center;
  gap: 10px;
  font-size: 15px;
  font-weight: 500;
}

.hint kbd {
  width: 45px;
  height: 24px;
  border-radius: 5px;
  background: #f0f3f9;
  font-family: inherit;
  line-height: 24px;
  text-align: center;
}

.toolbar {
  position: absolute;
  right: -1px;
  bottom: calc(100% + 14px);
  padding: 6px 9px 6px 10px;
  display: flex;
  gap: 7px;
  border-radius: 10px;
  background: #fff;
}

.toolbar button {
  width: 36px;
  height: 36px;
  border-radius: 6px;
  background: #f1f1f2;
  color: #454754;
}

/* prompt */
.prompt-wrap {
  position: absolute;
  left: 0;
  right: 0;
  bottom: 17px;
  max-width: 790px;
  margin: 0 auto;
  display: flex;
  flex-direction: column;
}

.prompt-wrap .tag {
  align-self: flex-end;
  margin-bottom: 12px;
}

.prompt {
  padding: 22px 22px 23px 21px;
  border: 4px solid #1a76e3;
  border-radius: 18px;
  background: #fff;
}

.prompt input {
  width: 100%;
  height: 36px;
  padding: 0 5px;
  font-size: 23px;
}

.prompt input::placeholder {
  color: #a3a3a3;
}

.prompt-tools {
  margin-top: 49px;
  display: flex;
  gap: 11px;
}

.attach {
  width: 52px;
  height: 52px;
}

.model {
  width: 188px;
  height: 52px;
  gap: 11px;
  border-radius: 10px;
  background: #f2f3f4;
  color: #111;
  font-weight: 500;
}

.model .icon {
  color: #777;
}

.modes {
  height: 52px;
  padding: 4px 0;
  display: flex;
  border-radius: 10px;
  background: #f6f7f9;
}

.modes button {
  width: 54px;
  border-radius: 8px;
}

.modes .icon {
  color: #777;
}

.modes .on {
  width: 146px;
  gap: 12px;
  background: #e4e6e7;
  color: #111;
  font-size: 19px;
  font-weight: 500;
}

.send {
  width: 52px;
  height: 52px;
  margin-left: auto;
  border-radius: 10px;
  background: #fafbfc;
  color: #cfcfd2;
}

.disclaimer {
  margin-top: 13px;
  font-size: 16px;
  font-weight: 400;
  line-height: 20px;
  color: #929292;
  text-align: center;
}

/* config sidebar */
.config {
  overflow: hidden;
  border-left: 1px solid #dcdcdc;
}

.config::after {
  inset: 7px 0 0 5px;
}

.config section {
  padding: 21px 19px 19px 26px;
}

.config section:first-child {
  padding: 26px 19px 22px 26px;
}

.config section + section {
  border-top: 1px solid #ebedef;
}

.config .search {
  margin: 0 4px 27px -4px;
}

.sub {
  display: block;
  margin: 19px 0 9px 7px;
  font-size: 18px;
  font-weight: 400;
  line-height: 22px;
}

.chips {
  display: flex;
  flex-wrap: wrap;
  gap: 13px 14px;
}

.chip {
  height: 54px;
  padding: 0 11px 0 7px;
  gap: 10px;
  border: 1px dashed #dcdfe3;
  border-radius: 12px;
  background: #f6f7f9;
  color: #3b414d;
  font-size: 21px;
  font-weight: 500;
}

.chip span {
  width: 36px;
  height: 36px;
  display: flex;
  align-items: center;
  justify-content: center;
  border-radius: 8px;
  background: #e7e8ea;
}

.chip.blue span { background: #e0eaf9; color: #2b7fff; }
.chip.orange span { background: #f6ede0; color: #ff9d0a; }
.chip.green span { background: #e2f1e7; color: #12c452; }

.more {
  width: calc(100% - 6px);
  margin-top: 20px;
  height: 24px;
  gap: 9px;
  color: #888;
  font-size: 19px;
}

.attr-head {
  margin: 20px 0 8px 7px;
  display: grid;
  grid-template-columns: 1fr 1fr;
  font-size: 18px;
  line-height: 26px;
}

.attr-list {
  margin-right: 6px;
  padding: 6px;
  display: flex;
  flex-direction: column;
  gap: 4px;
  border-radius: 10px;
  background: #f6f7f9;
}

.attr-list li {
  height: 52px;
  padding: 0 8px 0 12px;
  display: flex;
  align-items: center;
  border-radius: 8px;
  font-size: 20px;
}

.attr-list input {
  flex: 1;
  min-width: 0;
  margin-left: 7px;
  height: 28px;
}

.attr-list select {
  width: 124px;
  height: 39px;
  margin: 0 8px;
  padding-left: 13px;
  border-radius: 6px;
  background-color: #e8e9eb;
  font-size: 19px;
  color: #5a5c68;
}

.attr-list .selected {
  background-color: #e8e9eb;
  color: #050a18;
}

.attr-list .selected input {
  background: linear-gradient(#050a18, #050a18) left / 2px 28px no-repeat;
  font-weight: 500;
}

.attr-list .selected select,
.attr-list .selected .square {
  background-color: #dcdddf;
}

.flags-title {
  margin-bottom: 12px;
}

.flags {
  margin-right: 6px;
  display: grid;
  grid-template-columns: 1fr 1fr;
  gap: 10px;
}

.flags label {
  height: 52px;
  padding: 0 15px 0 17px;
  display: flex;
  align-items: center;
  border-radius: 10px;
  background: #f6f7f9;
  font-size: 18px;
  font-weight: 500;
}

.flags .icon {
  width: 22px;
}

.flags span {
  flex: 1;
  margin-left: 15px;
}

.flags .on {
  background: #f1f1f1;
  color: #050a18;
  font-weight: 600;
}

.flags input {
  appearance: none;
  width: 26px;
  height: 26px;
  border-radius: 4px;
  background: #d4d6d6;
}

.flags input:checked {
  background: #020617 url("data:image/svg+xml,%3Csvg xmlns='http://www.w3.org/2000/svg' viewBox='0 0 14 10' fill='none' stroke='white' stroke-width='2'%3E%3Cpath d='M1 5l4 4 8-8'/%3E%3C/svg%3E") no-repeat center / 13px 10px;
}

.field-label {
  margin: 23px 0 7px 7px;
}

.box {
  height: 52px;
  margin-right: 6px;
  padding-right: 7px;
  display: grid;
  grid-template-columns: 1fr auto;
  align-items: center;
  border-radius: 8px;
  background: #f6f7f9;
  font-size: 18px;
}

.box input {
  min-width: 0;
  padding-left: 13px;
}

.box .square {
  grid-area: 1 / 2;
  z-index: 1;
}

.box.tall {
  height: 130px;
  padding: 0;
  align-items: start;
}

.box textarea {
  grid-area: 1 / 1 / 2 / 3;
  height: 130px;
  padding: 16px 60px 16px 13px;
  line-height: 22px;
  resize: vertical;
}

.box.tall .square {
  margin: 7px 7px 0 0;
}
```
